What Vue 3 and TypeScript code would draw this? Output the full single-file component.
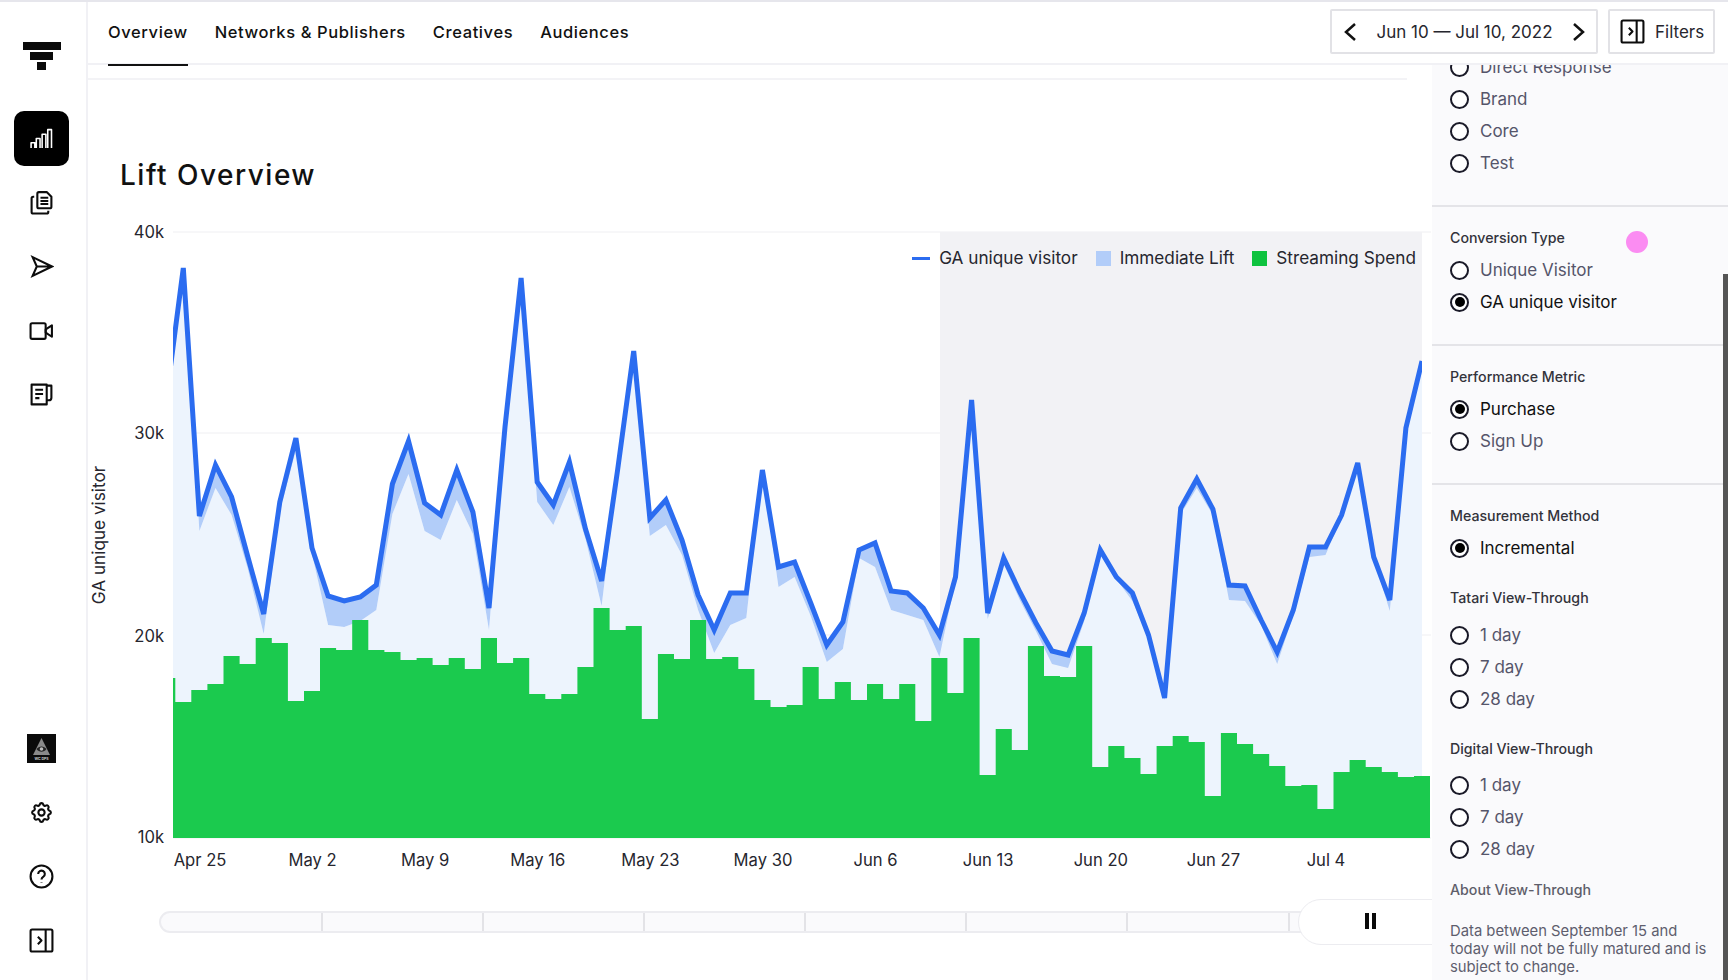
<script setup lang="ts">
const STEP = 16.087
const X0 = 183.3
const BASE = 838

const lineY: number[] = [392, 268, 516, 465, 497, 556, 614, 502, 438, 548, 596, 601, 597, 585, 484, 441, 503, 515, 470, 512, 608, 427, 278, 482, 505, 462, 529, 581, 470, 351, 518, 500, 540, 595, 630, 593, 593, 470, 567, 562, 603, 645, 622, 550, 543, 591, 593, 608, 635, 577, 400, 613, 558, 592, 623, 651, 655, 613, 550, 577, 593, 635, 698, 508, 479, 509, 585, 586, 620, 652, 610, 547, 547, 515, 463, 557, 600, 428, 361]
const lift: number[] = [20, 10, 15, 23, 18, 12, 20, 10, 12, 6, 29, 26, 24, 25, 30, 33, 28, 25, 30, 22, 22, 6, 10, 20, 20, 25, 10, 25, 5, 10, 18, 25, 15, 15, 23, 32, 25, 4, 20, 15, 13, 17, 27, 8, 24, 19, 22, 12, 22, 3, 3, 6, 6, 8, 8, 13, 13, 8, 2, 2, 8, 3, 2, 6, 9, 6, 15, 15, 5, 12, 5, 10, 8, 2, 5, 2, 11, 1, 0]
const barTop: number[] = [702, 690, 684, 656, 664, 638, 643, 701, 691, 648, 650, 620, 650, 652, 660, 658, 665, 658, 669, 638, 663, 658, 694, 699, 694, 667, 608, 630, 626, 719, 654, 659, 620, 659, 657, 669, 700, 707, 705, 667, 699, 682, 700, 684, 699, 684, 721, 658, 693, 638, 775, 729, 750, 646, 676, 677, 646, 767, 746, 758, 774, 746, 736, 742, 796, 733, 744, 754, 766, 786, 785, 809, 772, 760, 767, 772, 777, 776]

const xAt = (i: number): number => +(X0 + STEP * (i - 1)).toFixed(1)

const topPts = lineY.map((y, i) => `${xAt(i)},${y}`)
const lowPts = lineY.map((y, i) => `${xAt(i)},${y + lift[i]}`)

const linePoints = topPts.join(' ')
const bandPoints = [...topPts, ...[...lowPts].reverse()].join(' ')
const areaPoints = [...lowPts, `${xAt(lineY.length - 1)},${BASE}`, `${xAt(0)},${BASE}`].join(' ')

const barPath = ((): string => {
  const left = X0 - STEP / 2
  let d = `M173 ${BASE}V678H${left.toFixed(1)}`
  barTop.forEach((t, i) => {
    d += `V${t}H${(left + STEP * (i + 1)).toFixed(1)}`
  })
  return d + `V${BASE}Z`
})()

const gridLines: { y: number; label: string; ly: number }[] = [
  { y: 232, label: '40k', ly: 232 },
  { y: 433, label: '30k', ly: 433 },
  { y: 635, label: '20k', ly: 636 },
  { y: 838, label: '10k', ly: 837 },
]
const xLabels: string[] = ['Apr 25', 'May 2', 'May 9', 'May 16', 'May 23', 'May 30', 'Jun 6', 'Jun 13', 'Jun 20', 'Jun 27', 'Jul 4']
const xTicks = xLabels.map((label, i) => ({ label, x: 200 + 112.6 * i }))

const tabs: string[] = ['Overview', 'Networks & Publishers', 'Creatives', 'Audiences']
const segments: number[] = [1, 2, 3, 4, 5, 6, 7, 8]

interface Opt { label: string; on?: boolean }
const g0: Opt[] = [{ label: 'Direct Response' }, { label: 'Brand' }, { label: 'Core' }, { label: 'Test' }]
const g1: Opt[] = [{ label: 'Unique Visitor' }, { label: 'GA unique visitor', on: true }]
const g2: Opt[] = [{ label: 'Purchase', on: true }, { label: 'Sign Up' }]
const g3: Opt[] = [{ label: 'Incremental', on: true }]
const days: Opt[] = [{ label: '1 day' }, { label: '7 day' }, { label: '28 day' }]
</script>

<template>
  <div class="page">
    <aside class="rail">
      <div class="logo">
        <svg width="38" height="30" viewBox="0 0 38 30"><rect x="0" y="0" width="38" height="8" /><rect x="7" y="10" width="23" height="8" /><rect x="14" y="20" width="9" height="8" /></svg>
      </div>
      <nav class="rail-group">
        <button class="rail-btn active">
          <svg class="ico" viewBox="0 0 24 24"><path d="M2 21v-5h3.6v5M7 21v-9h3.6v9M12.6 21V8h3.6v13M18 21V3.5h3.6V21" /></svg>
        </button>
        <button class="rail-btn">
          <svg class="ico" viewBox="0 0 24 24"><path d="M8 3.5A1.5 1.5 0 0 1 9.500 2H17l4.500 4.500V16a1.500 1.500 0 0 1-1.500 1.500H9.500A1.500 1.500 0 0 1 8 16zM11 7.500h7.500M11 10.500h7.500M11 13.500h7.500" /><path d="M5 6.500H4A1.500 1.500 0 0 0 2.500 8v13A1.500 1.500 0 0 0 4 22.500h13a1.500 1.500 0 0 0 1.500-1.500v-1" /></svg>
        </button>
        <button class="rail-btn">
          <svg class="ico" viewBox="0 0 24 24"><path d="M3.500 3L22 12 3.500 21 7.500 12zM7.500 12H22" stroke-linejoin="miter" /></svg>
        </button>
        <button class="rail-btn">
          <svg class="ico" viewBox="0 0 24 24"><rect x="1.500" y="5" width="14.500" height="15" rx="1.500" /><path d="M16 11l6-4v11l-6-4z" /></svg>
        </button>
        <button class="rail-btn">
          <svg class="ico" viewBox="0 0 24 24"><path d="M2.500 2.500h14.500V21.500H2.500zM17 3.500h4.500V15a2.500 2.500 0 0 1-2.500 2.500h-2M6 7.500h7.500M6 11.500h7.500M6 15.500h4" /></svg>
        </button>
      </nav>
      <div class="rail-group rail-bottom">
        <button class="rail-btn">
          <svg width="29" height="29" viewBox="0 0 29 29"><rect width="29" height="29" fill="#0b0b0b" /><path d="M14.500 4L23 21H6z" fill="#8a8a8a" /><path d="M9.500 15c2.500-3.500 7.500-3.500 10 0-2.500 3.500-7.500 3.500-10 0z" fill="#222" /><circle cx="14.500" cy="15" r="1.800" fill="#bbb" /><text x="14.500" y="26" text-anchor="middle" class="brand-txt">WC DPS</text></svg>
        </button>
        <button class="rail-btn">
          <svg class="ico" viewBox="0 0 24 24"><path d="M10.325 4.317c.426-1.756 2.924-1.756 3.350 0a1.724 1.724 0 0 0 2.573 1.066c1.543-.94 3.310.826 2.370 2.370a1.724 1.724 0 0 0 1.065 2.572c1.756.426 1.756 2.924 0 3.350a1.724 1.724 0 0 0-1.066 2.573c.94 1.543-.826 3.310-2.370 2.370a1.724 1.724 0 0 0-2.572 1.065c-.426 1.756-2.924 1.756-3.350 0a1.724 1.724 0 0 0-2.573-1.066c-1.543.94-3.310-.826-2.370-2.370a1.724 1.724 0 0 0-1.065-2.572c-1.756-.426-1.756-2.924 0-3.350a1.724 1.724 0 0 0 1.066-2.573c-.94-1.543.826-3.310 2.370-2.370 1 .608 2.296.07 2.572-1.065z" /><circle cx="12" cy="12" r="3" /></svg>
        </button>
        <button class="rail-btn">
          <svg class="ico" viewBox="0 0 24 24"><circle cx="12" cy="12" r="10.500" /><path d="M8.800 9.500a3.200 3.200 0 1 1 5 2.700c-1.100.7-1.800 1.300-1.800 2.600M12 17.500v.6" /></svg>
        </button>
        <button class="rail-btn">
          <svg class="ico" viewBox="0 0 24 24"><rect x="1.500" y="1.500" width="21" height="21" rx="1.500" /><path d="M16 1.500v21M8.500 8.500l3.500 3.500-3.500 3.500" /></svg>
        </button>
      </div>
    </aside>

    <div class="main">
      <header class="topbar">
        <div class="tabs">
          <a v-for="(t, i) in tabs" :key="t" class="tab" :class="{ current: i === 0 }">{{ t }}</a>
        </div>
        <div class="controls">
          <div class="datebox">
            <svg class="chev" viewBox="0 0 14 20"><path d="M12 2L3 10l9 8" /></svg>
            <span>Jun 10 — Jul 10, 2022</span>
            <svg class="chev" viewBox="0 0 14 20"><path d="M2 2l9 8-9 8" /></svg>
          </div>
          <div class="filters">
            <svg class="ico" viewBox="0 0 24 24"><rect x="1.500" y="1.500" width="21" height="21" rx="1.500" /><path d="M16 1.500v21M8.500 8.500l3.500 3.500-3.500 3.500" /></svg>
            <span>Filters</span>
          </div>
        </div>
      </header>

      <div class="body">
        <section class="content">
          <div class="strip"></div>
          <h1 class="title">Lift Overview</h1>
          <div class="chart">
            <svg class="plot" width="1344" height="664" viewBox="88 216 1344 664">
              <defs>
                <clipPath id="plotclip"><rect x="173" y="216" width="1249" height="640" /></clipPath>
              </defs>
              <line v-for="g in gridLines" :key="g.y" x1="173" x2="1431" :y1="g.y" :y2="g.y" class="grid" />
              <rect x="940" y="232" width="482" height="606" fill="#f2f2f5" />
              <g clip-path="url(#plotclip)">
                <polygon :points="areaPoints" fill="#edf4fd" />
                <polygon :points="bandPoints" fill="#b2cdf9" />
              </g>
              <path :d="barPath" fill="#1bca4e" />
              <g clip-path="url(#plotclip)">
                <polyline :points="linePoints" fill="none" stroke="#2b6cf0" stroke-width="5" />
              </g>
              <text v-for="g in gridLines" :key="g.label" x="164" :y="g.ly" class="axis" text-anchor="end" dominant-baseline="central">{{ g.label }}</text>
              <text v-for="t in xTicks" :key="t.label" :x="t.x" y="860" class="axis" text-anchor="middle" dominant-baseline="central">{{ t.label }}</text>
              <text class="axis ytitle" text-anchor="middle" dominant-baseline="central" transform="translate(98 535) rotate(-90)">GA unique visitor</text>
            </svg>
            <div class="legend">
              <span class="lg"><i class="sw-line"></i>GA unique visitor</span>
              <span class="lg"><i class="sw sw-lift"></i>Immediate Lift</span>
              <span class="lg"><i class="sw sw-spend"></i>Streaming Spend</span>
            </div>
          </div>
          <div class="scrub">
            <div class="track">
              <div v-for="s in segments" :key="s" class="seg"></div>
            </div>
            <div class="pill"><span class="pause"><i></i><i></i></span></div>
          </div>
        </section>

        <aside class="panel">
          <div class="panel-inner">
            <div class="group g-first">
              <label v-for="o in g0" :key="o.label" class="opt"><span class="radio"></span>{{ o.label }}</label>
            </div>
            <div class="group">
              <h3>Conversion Type</h3>
              <label v-for="o in g1" :key="o.label" class="opt" :class="{ on: o.on }"><span class="radio"></span>{{ o.label }}</label>
            </div>
            <div class="group">
              <h3>Performance Metric</h3>
              <label v-for="o in g2" :key="o.label" class="opt" :class="{ on: o.on }"><span class="radio"></span>{{ o.label }}</label>
            </div>
            <div class="group last">
              <h3>Measurement Method</h3>
              <label v-for="o in g3" :key="o.label" class="opt" :class="{ on: o.on }"><span class="radio"></span>{{ o.label }}</label>
              <h3 class="sub">Tatari View-Through</h3>
              <div class="sublist">
                <label v-for="o in days" :key="o.label" class="opt"><span class="radio"></span>{{ o.label }}</label>
              </div>
              <h3 class="sub">Digital View-Through</h3>
              <div class="sublist tight">
                <label v-for="o in days" :key="o.label" class="opt"><span class="radio"></span>{{ o.label }}</label>
              </div>
              <div class="about">About View-Through</div>
              <p class="note">Data between September 15 and today will not be fully matured and is subject to change.</p>
            </div>
          </div>
          <div class="scrollbar"></div>
        </aside>
      </div>
    </div>
    <div class="cursor-dot"></div>
  </div>
</template>

<style scoped>
.page {
  position: relative;
  display: flex;
  width: 1728px;
  height: 980px;
  box-sizing: border-box;
  border-top: 2px solid #e6e6ec;
  overflow: hidden;
  background: #fff;
  font-family: Inter, "Liberation Sans", sans-serif;
  color: #111;
}
.rail {
  width: 88px;
  flex: none;
  box-sizing: border-box;
  border-right: 2px solid #f1f1f5;
  display: flex;
  flex-direction: column;
  align-items: center;
  padding: 0 3px 12px 0;
}
.logo {
  height: 109px;
  display: flex;
  align-items: flex-start;
  padding-top: 40px;
  box-sizing: border-box;
}
.logo svg { fill: #0a0a0a; }
.rail-group {
  display: flex;
  flex-direction: column;
  gap: 9px;
}
.rail-bottom { margin-top: auto; }
.rail-btn {
  width: 55px;
  height: 55px;
  border: 0;
  padding: 0;
  background: none;
  border-radius: 10px;
  display: flex;
  align-items: center;
  justify-content: center;
}
.rail-btn.active { background: #000; }
.ico {
  width: 25px;
  height: 25px;
  fill: none;
  stroke: #0c0c0c;
  stroke-width: 2;
  stroke-linejoin: round;
}
.rail-btn.active .ico { stroke: #fff; stroke-width: 1.500; }
.brand-txt { font-size: 3.500px; fill: #ccc; font-family: Inter, sans-serif; font-weight: 700; }

.main { flex: 1; min-width: 0; display: flex; flex-direction: column; }
.topbar {
  height: 63px;
  flex: none;
  box-sizing: border-box;
  border-bottom: 2px solid #f1f1f5;
  display: flex;
  align-items: center;
  justify-content: space-between;
  padding: 0 13px 2px 20px;
  background: #fff;
  position: relative;
  z-index: 2;
}
.tabs { display: flex; gap: 27px; align-self: stretch; }
.tab {
  position: relative;
  display: flex;
  align-items: center;
  font-size: 16.500px;
  font-weight: 500;
  letter-spacing: 0.6px;
  color: #111;
}
.tab.current::after {
  content: "";
  position: absolute;
  left: 0;
  right: 0;
  bottom: -5px;
  height: 2px;
  background: #111;
}
.controls { display: flex; gap: 10px; }
.datebox, .filters {
  height: 45px;
  box-sizing: border-box;
  border: 2px solid #e2e2e6;
  border-radius: 2px;
  display: flex;
  align-items: center;
  font-size: 17px;
  color: #26262e;
}
.datebox { width: 268px; justify-content: space-between; padding: 0 10px 0 11px; }
.filters { width: 107px; gap: 10px; padding-left: 10px; }
.chev { width: 14px; height: 20px; fill: none; stroke: #111; stroke-width: 2.500; }

.body { flex: 1; min-height: 0; display: flex; }
.content {
  width: 1344px;
  flex: none;
  overflow: hidden;
  display: flex;
  flex-direction: column;
}
.strip {
  width: 1319px;
  height: 15px;
  box-sizing: border-box;
  border-bottom: 2px solid #f3f3f6;
  flex: none;
}
.title {
  margin: 79px 0 0 32px;
  font-size: 28px;
  line-height: 32px;
  font-weight: 500;
  letter-spacing: 1.500px;
  color: #111;
}
.chart { position: relative; margin-top: 25px; height: 664px; flex: none; }
.plot { display: block; }
.grid { stroke: #efeff2; stroke-width: 1; }
.axis { font-size: 16.600px; fill: #26262e; font-family: Inter, sans-serif; }
.ytitle { font-size: 17.200px; }
.legend {
  position: absolute;
  top: 32px;
  right: 16px;
  display: flex;
  gap: 18px;
  font-size: 17.200px;
  color: #26262e;
}
.lg { display: flex; align-items: center; gap: 9px; line-height: 20px; }
.sw-line { width: 18px; height: 3px; background: #2b6cf0; }
.sw { width: 15px; height: 15px; }
.sw-lift { background: #b2cdf9; }
.sw-spend { background: #0ec33f; }
.scrub { position: relative; margin: 31px 0 0 71px; height: 22px; }
.track {
  display: flex;
  width: 1300px;
  height: 22px;
  box-sizing: border-box;
  border: 2px solid #ececf0;
  border-radius: 11px 0 0 11px;
  background: #fafafc;
}
.seg {
  width: 161.200px;
  flex: none;
  box-sizing: border-box;
  border-right: 2px solid #e3e3e7;
}
.seg:first-child { width: 161.500px; }
.pill {
  position: absolute;
  left: 1139px;
  top: -12px;
  width: 180px;
  height: 46px;
  box-sizing: border-box;
  border: 1px solid #ececf0;
  border-radius: 23px;
  background: #fff;
}
.pause {
  position: absolute;
  left: 66px;
  top: 13px;
  display: flex;
  gap: 3px;
}
.pause i { width: 4px; height: 16px; background: #0a0a0a; display: block; }

.panel {
  position: relative;
  flex: 1;
  min-width: 0;
  overflow: hidden;
  background: #fafafc;
}
.panel-inner { margin-top: -14px; }
.group {
  padding: 21px 18px 26px;
  border-bottom: 2px solid #e4e4e8;
}
.group.g-first { padding-top: 0; }
.group.last { border-bottom: 0; }
h3 {
  margin: 0 0 6px;
  font-size: 14.200px;
  line-height: 20px;
  font-weight: 500;
  color: #33333b;
}
h3.sub { margin: 24px 0 0; }
.sublist { margin-top: 11px; }
.sublist.tight { margin-top: 10px; }
.opt {
  display: flex;
  align-items: center;
  gap: 11px;
  height: 32px;
  font-size: 17px;
  color: #55556a;
}
.opt.on { color: #111; }
.radio {
  width: 19px;
  height: 19px;
  flex: none;
  box-sizing: border-box;
  border: 2.500px solid #1a1a28;
  border-radius: 50%;
  background: #fff;
  position: relative;
}
.opt.on .radio::after {
  content: "";
  position: absolute;
  inset: 2.500px;
  border-radius: 50%;
  background: #000;
}
.about { margin-top: 15px; font-size: 14.200px; line-height: 20px; font-weight: 500; color: #5e5e6a; }
.note { margin: 22px 0 0; font-size: 14.800px; line-height: 18px; color: #5e5e6e; width: 262px; }
.scrollbar {
  position: absolute;
  right: 0;
  top: 209px;
  bottom: 0;
  width: 5px;
  background: #555;
}
.cursor-dot {
  position: absolute;
  left: 1626px;
  top: 229px;
  width: 22px;
  height: 22px;
  border-radius: 50%;
  background: #fb8cf2;
}
</style>
<style>
html, body { margin: 0; padding: 0; background: #fff; }
</style>
